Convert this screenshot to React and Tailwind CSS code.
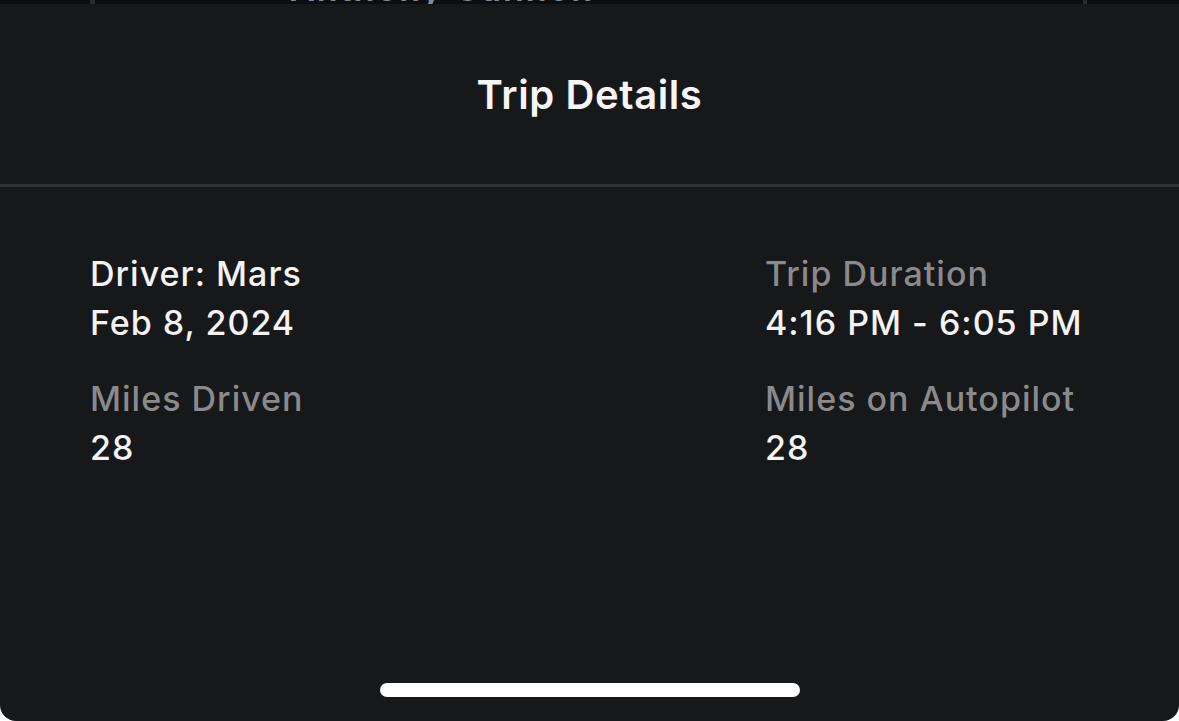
export default function App() {
  return (
    <div className="w-[1179px] h-[721px] bg-white overflow-hidden" style={{ fontFamily: "Inter, 'Noto Sans', sans-serif" }}>
      <div className="relative h-[4px] bg-[#0c0d10] overflow-hidden">
        <div className="absolute left-[90px] top-0 w-[5px] h-full bg-[#2a2b2e]" />
        <div className="absolute left-[1083px] top-0 w-[4px] h-full bg-[#2a2b2e]" />
        <div className="absolute left-[290px] top-[-28px] text-[34px] leading-none font-semibold text-[#8a8a8c] whitespace-nowrap tracking-[2px]">Anthony Gannon</div>
      </div>
      <div className="h-[717px] bg-[#17181a] rounded-b-[16px] flex flex-col">
        <div className="h-[183px] flex items-center justify-center border-b-[3px] border-[#2e2f31] pt-[2px]">
          <div className="text-[40px] font-semibold text-[#f5f5f5] tracking-[0.6px]">Trip Details</div>
        </div>
        <div className="flex justify-between pl-[90px] pr-[60px] pt-[62px] text-[34px] font-medium leading-[49px] tracking-[1px]">
          <div className="flex flex-col gap-[27px]">
            <div>
              <div className="text-[#f3f3f3]">Driver: Mars</div>
              <div className="text-[#f3f3f3]">Feb 8, 2024</div>
            </div>
            <div>
              <div className="text-[#8a8a8c]">Miles Driven</div>
              <div className="text-[#f3f3f3]">28</div>
            </div>
          </div>
          <div className="flex flex-col gap-[27px] w-[354px]">
            <div>
              <div className="text-[#8a8a8c]">Trip Duration</div>
              <div className="text-[#f3f3f3]">4:16 PM - 6:05 PM</div>
            </div>
            <div>
              <div className="text-[#8a8a8c]">Miles on Autopilot</div>
              <div className="text-[#f3f3f3]">28</div>
            </div>
          </div>
        </div>
        <div className="mt-auto mb-[24px] flex justify-center">
          <div className="w-[420px] h-[14px] rounded-full bg-white" />
        </div>
      </div>
    </div>
  );
}
